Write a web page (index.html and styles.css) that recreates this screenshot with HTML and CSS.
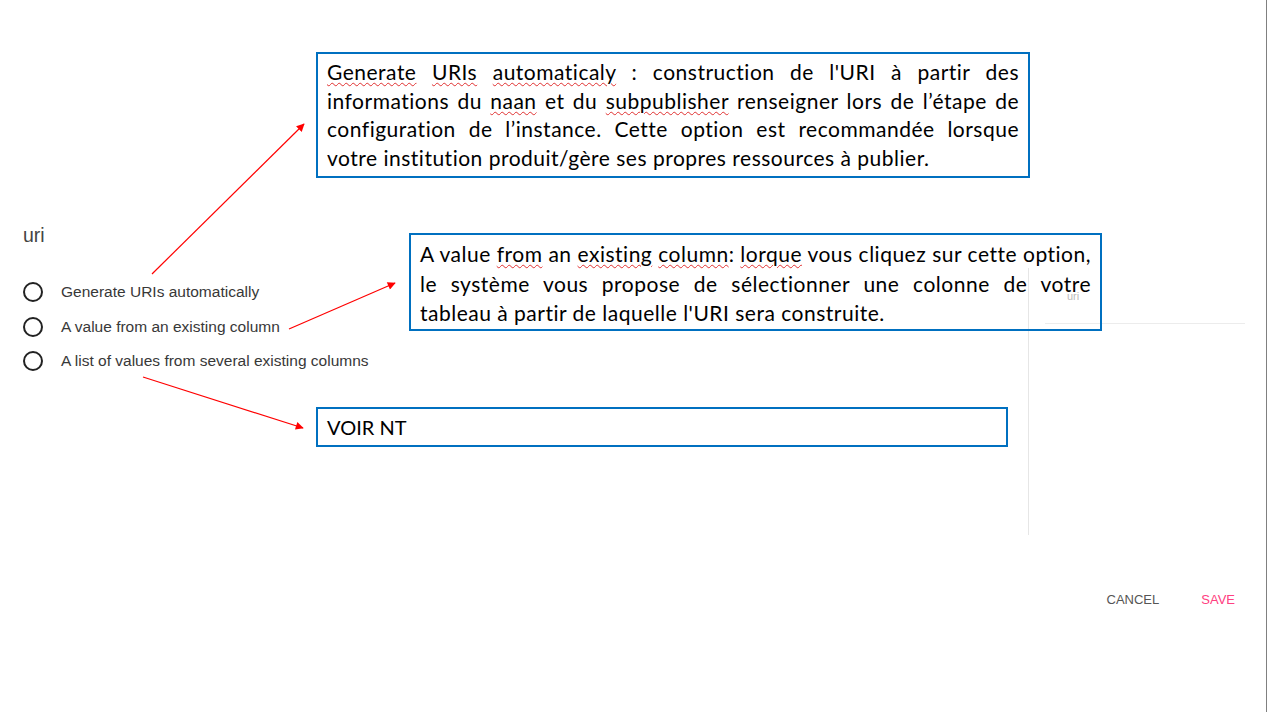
FILE: index.html
```html
<!DOCTYPE html>
<html lang="fr">
<head>
<meta charset="utf-8">
<title>URI</title>
<link rel="stylesheet" href="styles.css">
</head>
<body>
<div class="app">
  <div class="main">
    <div class="form">
      <div class="title">uri</div>
      <div class="options">
        <label class="option"><span class="radio"></span><span class="option-text">Generate URIs automatically</span></label>
        <label class="option"><span class="radio"></span><span class="option-text">A value from an existing column</span></label>
        <label class="option"><span class="radio"></span><span class="option-text">A list of values from several existing columns</span></label>
      </div>
    </div>
    <div class="side">
      <div class="side-label">uri</div>
      <div class="side-rule"></div>
    </div>
  </div>
  <div class="actions">
    <span class="btn btn-cancel">CANCEL</span>
    <span class="btn btn-save">SAVE</span>
  </div>

  <div class="note note-1">
    <div class="jl"><span class="sp">Generate</span> <span class="sp">URIs</span> <span class="sp">automaticaly</span> : construction de l'URI à partir des</div>
    <div class="jl">informations du <span class="sp">naan</span> et du <span class="sp">subpublisher</span> renseigner lors de l’étape de</div>
    <div class="jl">configuration de l’instance. Cette option est recommandée lorsque</div>
    <div class="ll">votre institution produit/gère ses propres ressources à publier.</div>
  </div>

  <div class="note note-2">
    <div class="jl">A value <span class="sp">from</span> an <span class="sp">existing</span> <span class="sp">column</span>: <span class="sp">lorque</span> vous cliquez sur cette option,</div>
    <div class="jl">le système vous propose de sélectionner une colonne de votre</div>
    <div class="ll">tableau à partir de laquelle l'URI sera construite.</div>
  </div>

  <div class="note note-3">
    <div class="ll">VOIR NT</div>
  </div>

  <svg class="arrows" width="1267" height="712" viewBox="0 0 1267 712">
    <defs>
      <marker id="head" viewBox="0 0 10 10" refX="9" refY="5" markerWidth="9" markerHeight="8" markerUnits="userSpaceOnUse" orient="auto">
        <path d="M0 0 L10 5 L0 10 Z" fill="#ff0000"/>
      </marker>
    </defs>
    <line x1="152" y1="274" x2="304" y2="124" stroke="#ff0000" stroke-width="1.2" marker-end="url(#head)"/>
    <line x1="289" y1="329" x2="395" y2="283" stroke="#ff0000" stroke-width="1.2" marker-end="url(#head)"/>
    <line x1="143" y1="377" x2="303" y2="428" stroke="#ff0000" stroke-width="1.2" marker-end="url(#head)"/>
  </svg>
</div>
</body>
</html>
```
FILE: styles.css
```css
html, body {
  margin: 0;
  padding: 0;
  background: #ffffff;
}

.app {
  position: relative;
  width: 1267px;
  height: 712px;
  box-sizing: border-box;
  border-right: 1px solid #808080;
  display: flex;
  flex-direction: column;
  font-family: "Liberation Sans", Arial, sans-serif;
  overflow: hidden;
}

.main {
  display: flex;
  height: 540px;
}

.form {
  flex: 1;
  padding: 222px 0 0 23px;
}

.title {
  font-size: 19.5px;
  line-height: 27px;
  color: #444444;
}

.options {
  margin-top: 26px;
  display: flex;
  flex-direction: column;
}

.option {
  display: flex;
  align-items: center;
  height: 34.5px;
}

.radio {
  width: 16px;
  height: 16px;
  border: 2px solid #222222;
  border-radius: 50%;
  flex: none;
}

.option-text {
  margin-left: 18px;
  font-size: 15.5px;
  color: #383838;
}

.side {
  width: 238px;
  box-sizing: border-box;
  margin-top: 268px;
  height: 267px;
  border-left: 1px solid #e6e6e6;
  padding: 0 21px 0 16px;
}

.side-label {
  margin-top: 22px;
  padding-left: 22px;
  font-size: 11px;
  line-height: 13px;
  color: #bbbbbb;
}

.side-rule {
  margin-top: 20px;
  border-bottom: 1px solid #ececec;
}

.actions {
  display: flex;
  justify-content: flex-end;
  gap: 42px;
  padding-right: 31px;
  margin-top: 52px;
}

.btn {
  font-size: 13px;
  line-height: 16px;
}

.btn-cancel {
  color: #555555;
}

.btn-save {
  color: #ff4081;
}

.note {
  position: absolute;
  box-sizing: border-box;
  border: 2px solid #0070c0;
  background: transparent;
  font-family: Lato, "Liberation Sans", sans-serif;
  font-size: 21px;
  letter-spacing: 0.5px;
  color: #000000;
}

.note-1 {
  left: 316px;
  top: 52px;
  width: 714px;
  height: 126px;
  padding: 4px 9px 0 9px;
  line-height: 28.7px;
}

.note-2 {
  left: 409px;
  top: 233px;
  width: 693px;
  height: 98px;
  padding: 4px 9px 0 9px;
  line-height: 29.5px;
}

.note-3 {
  left: 316px;
  top: 407px;
  width: 692px;
  height: 40px;
  padding: 3px 9px 0 9px;
  line-height: 30px;
  font-size: 20px;
  letter-spacing: 0;
}

.jl {
  text-align: justify;
  text-align-last: justify;
  white-space: nowrap;
}

.ll {
  text-align: left;
  white-space: nowrap;
}

.sp {
  text-decoration: underline wavy #e03030;
  text-decoration-thickness: 1px;
  text-underline-offset: 2px;
}

.arrows {
  position: absolute;
  left: 0;
  top: 0;
  pointer-events: none;
}
```
